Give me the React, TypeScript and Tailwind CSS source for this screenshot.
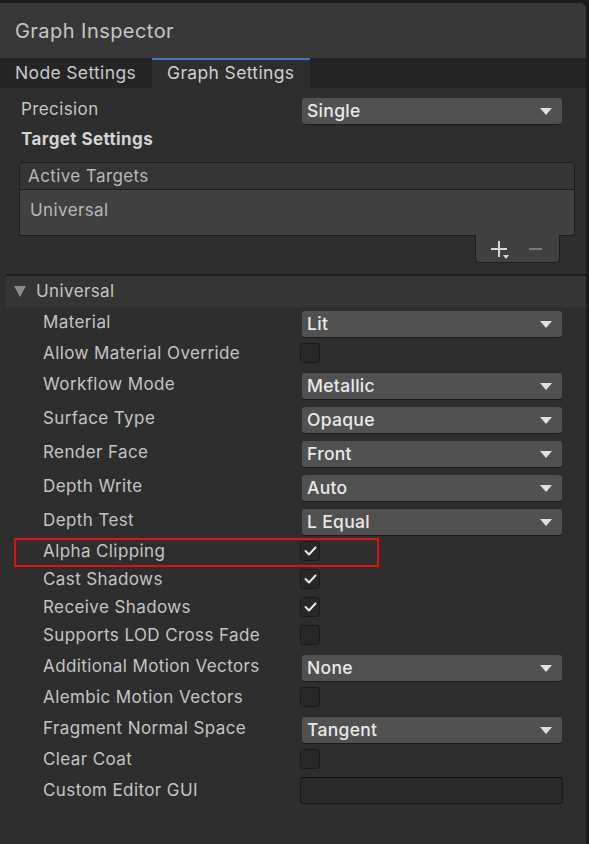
import React from "react";

const Arrow = () => (
  <svg width="12" height="7" viewBox="0 0 12 7" className="shrink-0">
    <polygon points="0,0 12,0 6,7" fill="#e0e0e0" />
  </svg>
);

const Dropdown = ({ value }: { value: string }) => (
  <div className="w-[260px] h-[26px] rounded-[3px] bg-[#515151] shadow-[0_1px_0_#1c1c1c] flex items-center justify-between pl-[5px] pr-[10px]">
    <span className="text-[17.5px] tracking-[0.3px] font-medium text-[#e8e8e8] leading-none">{value}</span>
    <Arrow />
  </div>
);

const Check = ({ checked }: { checked?: boolean }) => (
  <div className="w-[20px] h-[20px] -ml-[2px] rounded-[3px] bg-[#282828] border border-[#1c1c1c] flex items-center justify-center">
    {checked && (
      <svg width="13" height="10" viewBox="0 0 13 10">
        <polyline points="1.5,5 5,8.5 11.5,1.5" fill="none" stroke="#e8e8e8" strokeWidth="2" strokeLinecap="round" strokeLinejoin="round" />
      </svg>
    )}
  </div>
);

type Row = { label: string; kind: "dd" | "cb" | "tf"; value?: string; checked?: boolean };

const rows: Row[] = [
  { label: "Material", kind: "dd", value: "Lit" },
  { label: "Allow Material Override", kind: "cb" },
  { label: "Workflow Mode", kind: "dd", value: "Metallic" },
  { label: "Surface Type", kind: "dd", value: "Opaque" },
  { label: "Render Face", kind: "dd", value: "Front" },
  { label: "Depth Write", kind: "dd", value: "Auto" },
  { label: "Depth Test", kind: "dd", value: "L Equal" },
  { label: "Alpha Clipping", kind: "cb", checked: true },
  { label: "Cast Shadows", kind: "cb", checked: true },
  { label: "Receive Shadows", kind: "cb", checked: true },
  { label: "Supports LOD Cross Fade", kind: "cb" },
  { label: "Additional Motion Vectors", kind: "dd", value: "None" },
  { label: "Alembic Motion Vectors", kind: "cb" },
  { label: "Fragment Normal Space", kind: "dd", value: "Tangent" },
  { label: "Clear Coat", kind: "cb" },
  { label: "Custom Editor GUI", kind: "tf" },
];

const labelCls = "w-[296px] pl-[37px] text-[17px] tracking-[0.4px] text-[#c4c4c4] leading-none";

const PropRow = ({ r }: { r: Row }) => {
  if (r.kind === "dd") {
    return (
      <div className="h-[34px] flex items-center">
        <div className={labelCls + " -mt-[3px]"}>{r.label}</div>
        <Dropdown value={r.value!} />
      </div>
    );
  }
  if (r.kind === "cb") {
    return (
      <div className="h-[28px] flex items-start pt-[2px]">
        <div className={labelCls + " h-[20px] flex items-center"}>{r.label}</div>
        <Check checked={r.checked} />
      </div>
    );
  }
  return (
    <div className="h-[34px] flex items-start pt-[2px]">
      <div className={labelCls + " h-[27px] flex items-center"}>{r.label}</div>
      <div className="w-[263px] -ml-[2px] h-[27px] rounded-[3px] bg-[#2a2a2a] border border-[#1a1a1a] border-t-[#121212]" />
    </div>
  );
};

export default function App() {
  return (
    <div
      className="w-[589px] h-[844px] bg-[#1a1a1a] pt-[3px] pr-[3px] overflow-hidden relative"
      style={{ fontFamily: "Inter, 'Noto Sans', sans-serif" }}
    >
      <div className="h-full rounded-tr-[6px] bg-[#2e2e2e] flex flex-col overflow-hidden">
        {/* Title */}
        <div className="h-[55px] bg-[#383838] flex items-center px-[15px] shrink-0">
          <span className="text-[20px] tracking-[0.45px] text-[#c6c6c6] leading-none">Graph Inspector</span>
        </div>
        {/* Tabs */}
        <div className="h-[30px] bg-[#252525] flex shrink-0">
          <div className="w-[152px] pl-[15px] flex items-center text-[17.5px] tracking-[0.35px] text-[#c8c8c8] leading-none">Node Settings</div>
          <div className="w-[158px] bg-[#2e2e2e] border-t-2 border-[#3b7ac4] pl-[15px] flex items-center text-[17.5px] tracking-[0.35px] text-[#d0d0d0] leading-none">
            <span className="-mt-[2px]">Graph Settings</span>
          </div>
        </div>
        {/* Body */}
        <div className="flex flex-col pt-[6px]">
          <div className="h-[34px] flex items-center">
            <div className="w-[302px] pl-[21px] text-[17px] tracking-[0.4px] text-[#c4c4c4] leading-none -mt-[3px]">Precision</div>
            <Dropdown value="Single" />
          </div>
          <div className="h-[22px] flex items-center pl-[21px] text-[17px] tracking-[0.4px] font-bold text-[#d4d4d4] leading-none">Target Settings</div>
          {/* Active Targets list */}
          <div className="mt-[12px] ml-[19px] w-[556px] flex flex-col">
            <div className="h-[28px] bg-[#353535] border border-[#1e1e1e] rounded-t-[4px] flex items-center pl-[8px] text-[17px] tracking-[0.4px] text-[#b8b8b8] leading-none">
              Active Targets
            </div>
            <div className="h-[46px] bg-[#414141] border border-t-0 border-[#1e1e1e] rounded-b-[3px] flex items-center pl-[10px] text-[17px] tracking-[0.4px] text-[#b8b8b8] leading-none">
              <span className="-mt-[4px]">Universal</span>
            </div>
            <div className="ml-[456px] w-[85px] h-[28px] bg-[#414141] border border-t-0 border-[#1e1e1e] rounded-b-[4px] flex items-center pl-[14px] -mt-[1px]">
              <div className="relative w-[18px] h-[18px]">
                <svg width="18" height="18" viewBox="0 0 18 18" className="absolute left-0 top-0">
                  <rect x="8" y="1" width="2" height="16" fill="#d8d8d8" />
                  <rect x="1" y="8" width="16" height="2" fill="#d8d8d8" />
                </svg>
                <svg width="6" height="4" viewBox="0 0 6 4" className="absolute left-[13px] top-[15px]">
                  <polygon points="0,0 6,0 3,4" fill="#d8d8d8" />
                </svg>
              </div>
              <div className="ml-[21px] w-[13px] h-[2px] bg-[#7c7c7c]" />
            </div>
          </div>
          {/* Universal section */}
          <div className="mt-[11px] ml-[6px] h-[2px] bg-[#1e1e1e]" />
          <div className="ml-[6px] h-[31px] bg-[#353535] flex items-center">
            <svg width="12" height="11" viewBox="0 0 12 11" className="ml-[8px]">
              <polygon points="0,0 12,0 6,11" fill="#8a8a8a" />
            </svg>
            <span className="ml-[10px] text-[17px] tracking-[0.4px] text-[#c4c4c4] leading-none">Universal</span>
          </div>
          <div className="ml-[6px] flex flex-col">
            {rows.map((r) => (
              <PropRow key={r.label} r={r} />
            ))}
          </div>
        </div>
      </div>
      {/* annotation highlight */}
      <div className="absolute left-[14px] top-[538px] w-[365px] h-[29px] border-2 border-[#e01010] pointer-events-none" />
    </div>
  );
}
